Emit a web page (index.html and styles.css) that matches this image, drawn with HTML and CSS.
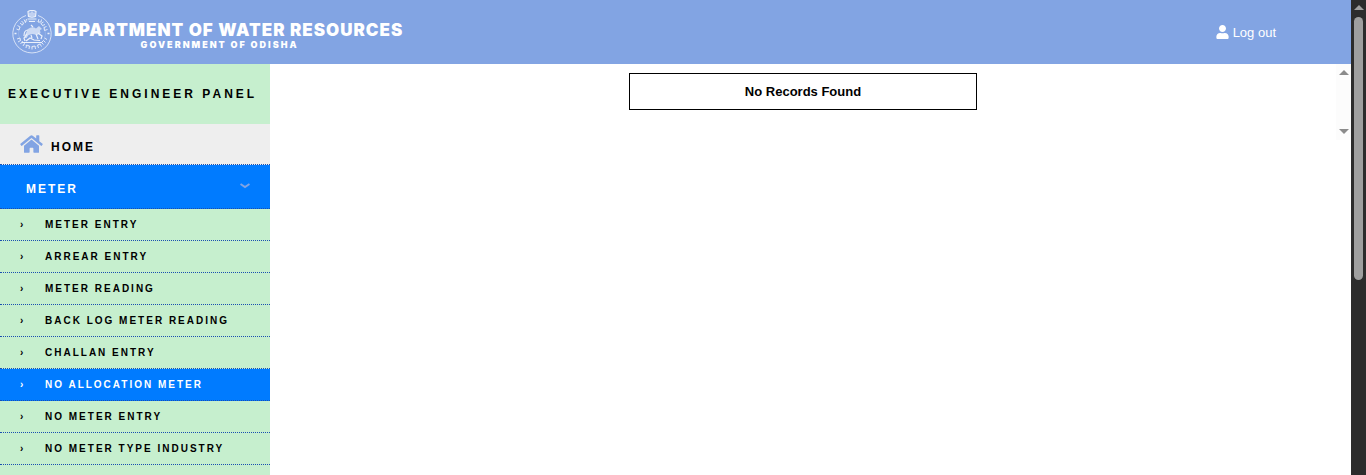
FILE: index.html
```html
<!DOCTYPE html>
<html lang="en">
<head>
    <meta charset="UTF-8">
    <meta name="viewport" content="width=device-width, initial-scale=1.0">
    <title>Department of Water Resources</title>
    <link rel="stylesheet" href="styles.css">
</head>
<body>
    <div class="page">
        <header class="header">
            <a class="brand" href="#">
                <svg class="emblem" viewBox="0 0 40 44" fill="none" stroke="#fff" aria-hidden="true">
                    <g opacity="0.85">
                        <path d="M14 5.500A19.200 19.200 0 1 0 26 5.500" stroke-width="0.8"/>
                        <circle cx="20" cy="23.700" r="13.500" stroke-width="0.5" opacity="0.4"/>
                        <!-- lettering round the seal -->
                        <path d="M4.500 19l2.500 1 1-3-2.500-1.500M8 13l2.500 2 1-2-2-2M12 9.500l1.500 3 1-3.500M27 9l-1 3 3 0 .5-2.500M31.500 12l-2.500 1.500 1.500 2 2.500-1M34.500 16.500l-2.500 1 .5 3 3-1M5 29l3-1 .5 2.500-2.500 1.500M8.500 34l2-2.500 2 2-1.500 2.500M14 38l.5-3 3 1-.5 3M20 39.500v-3l3-.5.500 3M26.500 38l-1-3 2.500-1 1.500 2.500M31.500 34.500l-2-2 2-2 2 2M35 29.500l-2.500-1.500" stroke-width="0.9"/>
                        <!-- capital -->
                        <path d="M16 1.500q4-2 8 0l-.5 5q-3.500 1.500-7 0zM15.500 9h9M17 11.500h6M18 2.500v4M20 1.500v5M22 2.500v4" stroke-width="1.200"/>
                        <!-- horse and warrior -->
                        <path d="M16 19q4-3 8-.5l3-2.500 3 3-2 1 .5 3-3 2-5-1-4 1-2 3-2 0 1-4z" fill="#fff" fill-opacity="0.7" stroke="none"/>
                        <path d="M16 20q-4 0-4 6M26 23l4 3-1 3M24 24l2 5M15 24l-3 4 1 3M10 32.500h20M14 31l4-3 4 2 6 0.500M19 25l1 3M21 17l-2-2" stroke-width="1.200"/>
                        <path d="M2.500 23.500h2M35.500 23.500h2" stroke-width="1.600"/>
                    </g>
                </svg>
                <span class="brand-text">
                    <span class="brand-title">DEPARTMENT OF WATER RESOURCES</span>
                    <span class="brand-subtitle">GOVERNMENT OF ODISHA</span>
                </span>
            </a>
            <a class="logout" href="#">
                <svg class="user-icon" viewBox="0 0 448 512" fill="currentColor" aria-hidden="true">
                    <path d="M224 256c70.700 0 128-57.300 128-128S294.700 0 224 0 96 57.300 96 128s57.300 128 128 128zm89.600 32h-16.700c-22.200 10.200-46.900 16-72.900 16s-50.600-5.800-72.900-16h-16.700C60.200 288 0 348.200 0 422.400V464c0 26.500 21.500 48 48 48h352c26.500 0 48-21.500 48-48v-41.600c0-74.200-60.200-134.400-134.400-134.400z"/>
                </svg>
                Log out
            </a>
        </header>

        <div class="content">
            <nav class="sidebar">
                <h2 class="panel-title">EXECUTIVE ENGINEER PANEL</h2>
                <a class="menu-home" href="#">
                    <svg class="home-icon" viewBox="0 0 576 512" fill="currentColor" aria-hidden="true">
                        <path d="M280.400 148.300L96 300.100V464a16 16 0 0 0 16 16l112.100-.3a16 16 0 0 0 15.900-16V368a16 16 0 0 1 16-16h64a16 16 0 0 1 16 16v95.600a16 16 0 0 0 16 16.100L464 480a16 16 0 0 0 16-16V300L295.700 148.300a12.200 12.200 0 0 0-15.300 0zM571.600 251.500L488 182.600V44.100a12 12 0 0 0-12-12h-56a12 12 0 0 0-12 12v72.600L318.500 43a48 48 0 0 0-61 0L4.300 251.500a12 12 0 0 0-1.600 16.900l25.500 31a12 12 0 0 0 16.900 1.600L280.400 107.200a12.200 12.200 0 0 1 15.300 0L531 301a12 12 0 0 0 16.900-1.600l25.500-31a12 12 0 0 0-1.800-16.900z"/>
                    </svg>
                    <span>HOME</span>
                </a>
                <button class="menu-group" type="button" aria-expanded="true">
                    <span>METER</span>
                    <svg class="chevron" viewBox="0 0 10 6" fill="none" stroke="currentColor" aria-hidden="true">
                        <path d="M.5 1l4.500 3 4.500-3" stroke-width="2"/>
                    </svg>
                </button>
                <ul class="submenu">
                    <li><a href="#">METER ENTRY</a></li>
                    <li><a href="#">ARREAR ENTRY</a></li>
                    <li><a href="#">METER READING</a></li>
                    <li><a href="#">BACK LOG METER READING</a></li>
                    <li><a href="#">CHALLAN ENTRY</a></li>
                    <li><a class="active" href="#">NO ALLOCATION METER</a></li>
                    <li><a href="#">NO METER ENTRY</a></li>
                    <li><a href="#">NO METER TYPE INDUSTRY</a></li>
                </ul>
            </nav>

            <main class="main">
                <div class="records">
                    <div class="records-body">
                        <table class="records-table">
                            <tr>
                                <th>No Records Found</th>
                            </tr>
                        </table>
                    </div>
                    <div class="scroll-track" aria-hidden="true">
                        <span class="arrow-up"></span>
                        <span class="arrow-down"></span>
                    </div>
                </div>
            </main>
        </div>
    </div>

    <div class="page-scroll" aria-hidden="true">
        <span class="arrow-up"></span>
        <span class="page-thumb"></span>
    </div>
</body>
</html>
```

FILE: styles.css
```css
* {
    box-sizing: border-box;
}

body {
    font-family: "Liberation Sans", Arial, sans-serif;
    font-size: 13px;
    color: #000;
    background-color: #fff;
    margin: 0;
    display: flex;
    height: 100vh;
    overflow: hidden;
}

a {
    color: inherit;
    text-decoration: none;
}

.page {
    flex: 1;
    display: flex;
    flex-direction: column;
}

/* header */
.header {
    display: flex;
    justify-content: space-between;
    align-items: center;
    height: 64px;
    flex-shrink: 0;
    padding: 0 75px 0 12px;
    background-color: #82a4e3;
    color: #fff;
}

.brand {
    display: flex;
    align-items: center;
    gap: 2px;
}

.emblem {
    width: 40px;
    height: 44px;
}

.brand-text {
    display: flex;
    flex-direction: column;
    align-items: center;
    padding-top: 8px;
}

.brand-title {
    font-family: Inter, "Liberation Sans", sans-serif;
    font-size: 17px;
    line-height: 18px;
    font-weight: 900;
    letter-spacing: 1px;
}

.brand-subtitle {
    font-family: Inter, "Liberation Sans", sans-serif;
    font-size: 9px;
    line-height: 12px;
    font-weight: 900;
    letter-spacing: 2px;
    padding-right: 18px;
}

.logout {
    display: flex;
    align-items: center;
    gap: 4px;
}

.user-icon {
    width: 13px;
    height: 14px;
}

/* sidebar */
.content {
    flex: 1;
    display: flex;
}

.sidebar {
    width: 270px;
    flex-shrink: 0;
    background-color: #c6efce;
    font-weight: bold;
}

.panel-title {
    margin: 0;
    font-size: 12px;
    line-height: 60px;
    letter-spacing: 3px;
    padding-left: 8px;
    white-space: nowrap;
}

.menu-home,
.menu-group,
.submenu a {
    display: flex;
    border: none;
    border-bottom: 1px dotted #1a4fb0;
}

.menu-home {
    height: 41px;
    align-items: center;
    gap: 8px;
    padding-left: 20px;
    background-color: #eee;
    font-size: 12px;
    letter-spacing: 2px;
}

.menu-home span {
    padding-top: 5px;
}

.home-icon {
    width: 23px;
    height: 20px;
    color: #82a4e3;
}

.menu-group {
    width: 100%;
    height: 44px;
    justify-content: space-between;
    align-items: center;
    padding: 4px 20px 0 26px;
    background-color: #007bff;
    color: #fff;
    font-family: inherit;
    font-size: 12px;
    font-weight: bold;
    letter-spacing: 2px;
    cursor: pointer;
}

.chevron {
    width: 10px;
    height: 6px;
    margin-bottom: 6px;
    color: #82a4e3;
}

.submenu {
    list-style: none;
    margin: 0;
    padding: 0;
}

.submenu a {
    font-size: 10px;
    line-height: 31px;
    letter-spacing: 2px;
    padding-left: 20px;
}

.submenu a::before {
    content: "\203A";
    width: 25px;
}

.submenu a.active {
    background-color: #007bff;
    color: #fff;
}

/* main area */
.main {
    flex: 1;
}

.records {
    display: flex;
    height: 76px;
}

.records-body {
    flex: 1;
    padding-top: 9px;
}

.records-table {
    width: 348px;
    margin: 0 auto;
    border: 1px solid #000;
    border-spacing: 0;
}

.records-table th {
    padding: 10px;
    line-height: 15px;
}

/* scroll bars */
.scroll-track,
.page-scroll {
    width: 15px;
    display: flex;
    flex-direction: column;
    align-items: center;
}

.scroll-track {
    justify-content: space-between;
    padding: 6px 0;
    background-color: #fcfcfc;
    color: #8b8b8b;
}

.page-scroll {
    gap: 7px;
    padding-top: 5px;
    background-color: #2c2c2c;
    color: #9f9f9f;
}

.arrow-up,
.arrow-down {
    border: 5px solid transparent;
}

.arrow-up {
    border-top: none;
    border-bottom-color: currentColor;
}

.arrow-down {
    border-bottom: none;
    border-top-color: currentColor;
}

.page-thumb {
    width: 9px;
    height: 56%;
    border-radius: 5px;
    background-color: #9f9f9f;
}
```
